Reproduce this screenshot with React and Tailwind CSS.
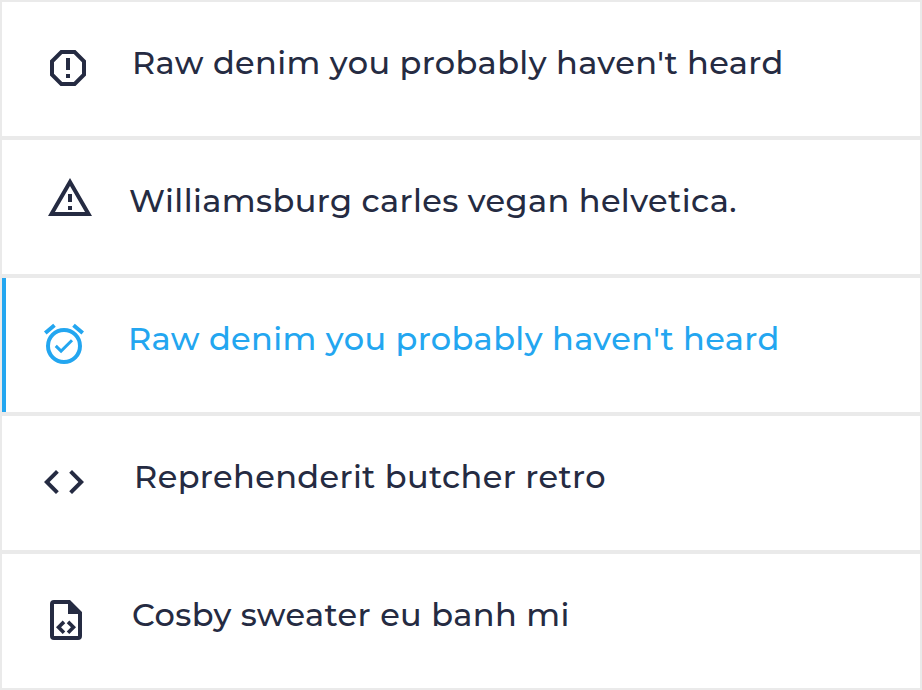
const icons = {
  report:
    "M8.27 3L3 8.27v7.46L8.27 21h7.46L21 15.73V8.27L15.73 3H8.27zM9.1 5h5.8L19 9.1v5.8L14.9 19H9.1L5 14.9V9.1L9.1 5zM11 7v6h2V7h-2zM11 15v2h2v-2h-2z",
  warning:
    "M12 2L1 21h22L12 2zm0 3.99L19.53 19H4.47L12 5.99zM11 10v4h2v-4h-2zM11 16v2h2v-2h-2z",
  alarm:
    "M22 5.72l-4.6-3.86-1.29 1.53 4.6 3.86L22 5.72zM7.88 3.39L6.6 1.86 2 5.71l1.29 1.53 4.59-3.85zM12 4a9 9 0 100 18 9 9 0 000-18zm0 16a7 7 0 110-14 7 7 0 010 14zm-1.46-5.47L8.41 12.4l-1.06 1.06 3.18 3.18 6-6-1.06-1.06-4.93 4.95z",
  code: "M9.4 16.6L4.8 12l4.6-4.6L8 6l-6 6 6 6 1.4-1.4zm5.2 0l4.6-4.6-4.6-4.6L16 6l6 6-6 6-1.4-1.4z",
  file: "M14 2l6 6v12a2 2 0 01-2 2H6a2 2 0 01-2-2V4a2 2 0 012-2h8m4 18V9h-5V4H6v16h12m-8.46-4.35l2.09 2.09L10.35 19 7 15.65l3.35-3.35 1.28 1.27-2.09 2.08m7.46 0L13.65 19l-1.27-1.26 2.09-2.09-2.09-2.08 1.27-1.27L17 15.65z",
};

const rows = [
  { icon: "report", text: "Raw denim you probably haven't heard", pad: "pl-[42px]", iconTop: "mt-[42px]", gap: "ml-[40px]" },
  { icon: "warning", text: "Williamsburg carles vegan helvetica.", pad: "pl-[44px]", iconTop: "mt-[34px]", gap: "ml-[35px]" },
  { icon: "alarm", text: "Raw denim you probably haven't heard", pad: "pl-[34px]", iconTop: "mt-[42px]", gap: "ml-[40px]", active: true },
  { icon: "code", text: "Reprehenderit butcher retro", pad: "pl-[38px]", iconTop: "mt-[42px]", gap: "ml-[46px]" },
  { icon: "file", text: "Cosby sweater eu banh mi", pad: "pl-[40px]", iconTop: "mt-[42px]", gap: "ml-[42px]" },
];

function Row({ row }) {
  return (
    <li
      className={`flex h-[134px] items-start bg-white ${row.pad} ${
        row.active ? "border-l-4 border-[#23a6f0] text-[#23a6f0]" : "text-[#252b42]"
      }`}
    >
      <svg viewBox="0 0 24 24" className={`size-12 shrink-0 ${row.iconTop}`}>
        <path d={icons[row.icon]} fill="currentColor" fillRule="evenodd" />
      </svg>
      <span
        className={`mt-[41px] text-[32px] leading-[40px] font-medium tracking-[0.4px] whitespace-nowrap ${row.gap}`}
      >
        {row.text}
      </span>
    </li>
  );
}

export default function App() {
  return (
    <ul className="flex h-[690px] w-[922px] flex-col gap-1 border-2 border-[#eaeaea] bg-[#eaeaea] font-['Montserrat','Inter',sans-serif]">
      {rows.map((row) => (
        <Row key={row.icon} row={row} />
      ))}
    </ul>
  );
}
